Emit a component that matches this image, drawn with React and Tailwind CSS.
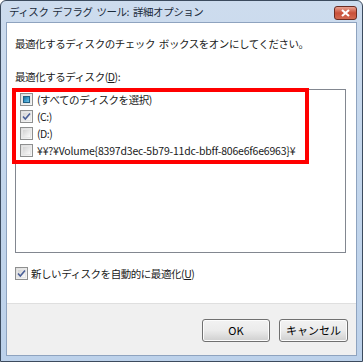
import React from "react";

const font = { fontFamily: '"Noto Sans CJK JP", "Noto Sans", sans-serif' };

function Box({ state }) {
  return (
    <span className="relative inline-flex h-[13px] w-[13px] shrink-0 items-center justify-center border border-[#8e8f8f] bg-gradient-to-br from-[#dcdcdc] to-[#f8f8f8]">
      <span className="absolute inset-[1px] border border-[#e6e6e6] bg-gradient-to-br from-[#d2d2d2] to-[#fafafa]" />
      {state === "checked" && (
        <svg width="11" height="11" viewBox="0 0 11 11" className="relative">
          <path d="M2 5.5 L4.3 8 L9 2.5" fill="none" stroke="#4a5f97" strokeWidth="1.6" />
        </svg>
      )}
      {state === "mixed" && (
        <span className="relative h-[7px] w-[7px] border border-[#1f5f83] bg-gradient-to-br from-[#1d6b94] via-[#3c9ccc] to-[#78c6e6]" />
      )}
    </span>
  );
}

function Row({ state, children, mono }) {
  return (
    <div className="flex h-[17px] items-center gap-[4px] pl-[4px]">
      <Box state={state} />
      <span className={mono ? "text-[10.5px] tracking-[-0.2px]" : ""}>{children}</span>
    </div>
  );
}

function Btn({ children, w }) {
  return (
    <button className={`${w} flex h-[23px] items-center justify-center rounded-[3px] border border-[#707070] bg-gradient-to-b from-[#f2f2f2] via-[#ebebeb] to-[#cfcfcf] text-[11px] text-black shadow-[inset_0_0_0_1px_#fcfcfc]`}>
      {children}
    </button>
  );
}

export default function App() {
  return (
    <div className="h-[363px] w-[364px] bg-white text-[#1a1a1a]" style={font}>
      <div className="relative flex h-[362px] w-[363px] flex-col rounded-t-[6px] border border-[#3c4b5e] bg-gradient-to-b from-[#cddcee] via-[#c3d6ec] to-[#bcd1ea]">
        <div className="flex h-[21px] shrink-0 items-center justify-between pl-[8px] pr-[5px]">
          <span className="text-[10.5px] tracking-[-0.45px] text-[#1a2a3a] [word-spacing:2px]">ディスク デフラグ ツール: 詳細オプション</span>
          <div className="mt-[3px] flex h-[14px] w-[23px] items-center justify-center rounded-[3px] border border-[#6b2c22] bg-gradient-to-b from-[#e8a191] via-[#c9503a] to-[#d26a52]">
            <svg width="11" height="8" viewBox="0 0 11 8">
              <path d="M2 1 L9 7 M9 1 L2 7" stroke="#fff" strokeWidth="2.2" />
            </svg>
          </div>
        </div>
        <div className="mx-[5px] mb-[5px] flex flex-1 flex-col border border-[#8ea3bf] bg-white">
          <div className="flex flex-1 flex-col px-[8px] text-[10.5px] tracking-[-0.45px]">
            <div className="mt-[12px] h-[17px] leading-[17px] [word-spacing:2px]">最適化するディスクのチェック ボックスをオンにしてください。</div>
            <div className="mt-[16px] h-[17px] leading-[17px]">
              最適化するディスク(<span className="underline">D</span>):
            </div>
            <div className="mt-[4px] h-[164px] w-[331px] border border-[#828790] bg-white pt-[1px]">
              <Row state="mixed">(すべてのディスクを選択)</Row>
              <Row state="checked">(C:)</Row>
              <Row>(D:)</Row>
              <Row mono>¥¥?¥Volume{"{"}8397d3ec-5b79-11dc-bbff-806e6f6e6963{"}"}¥</Row>
            </div>
            <div className="mt-[13px] flex items-center gap-[3px]">
              <Box state="checked" />
              <span>
                新しいディスクを自動的に最適化(<span className="underline">U</span>)
              </span>
            </div>
          </div>
          <div className="flex h-[52px] shrink-0 items-start justify-end gap-[9px] border-t border-[#dfdfdf] bg-[#f0f0f0] pr-[8px] pt-[15px]">
            <Btn w="w-[68px]">OK</Btn>
            <Btn w="w-[69px]">キャンセル</Btn>
          </div>
        </div>
        <div className="pointer-events-none absolute left-[11px] top-[87px] h-[76px] w-[297px] border-[4px] border-[#ff0000]" />
      </div>
    </div>
  );
}
